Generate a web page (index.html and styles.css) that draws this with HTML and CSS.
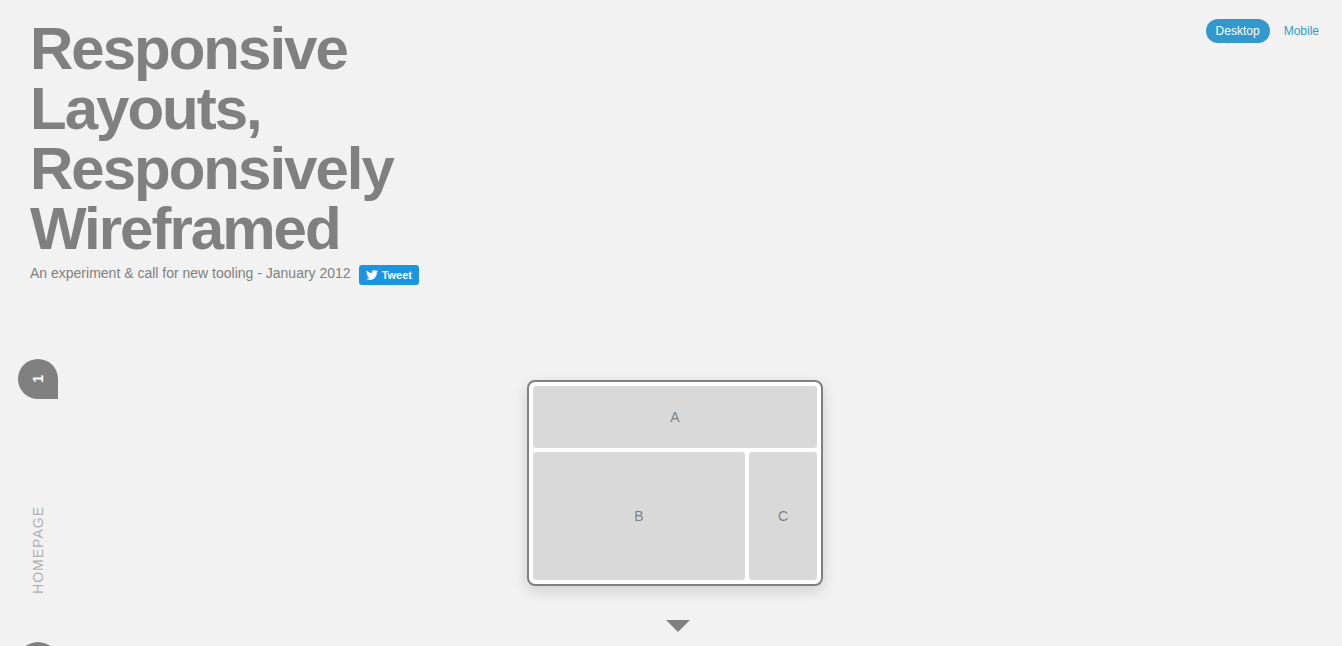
FILE: index.html
```html
<!DOCTYPE html>
<html lang="en">
<head>
<meta charset="utf-8">
<meta name="viewport" content="width=device-width, initial-scale=1">
<title>Responsive Layouts, Responsively Wireframed</title>
<link rel="stylesheet" href="styles.css">
</head>
<body>
<header class="masthead">
  <div class="intro">
    <h1 class="title">Responsive Layouts, Responsively Wireframed</h1>
    <div class="byline">
      <p class="tagline">An experiment &amp; call for new tooling - January 2012</p>
      <a class="tweet" href="#tweet">
        <svg class="bird" viewBox="0 2 24 20" aria-hidden="true"><path d="M23.95 4.57a10 10 0 0 1-2.82.77 4.96 4.96 0 0 0 2.16-2.72c-.95.55-2 .96-3.13 1.18a4.92 4.92 0 0 0-8.38 4.49C7.69 8.1 4.07 6.13 1.64 3.16a4.82 4.82 0 0 0-.67 2.48c0 1.71.87 3.21 2.19 4.1a4.9 4.9 0 0 1-2.23-.62v.06a4.92 4.92 0 0 0 3.95 4.83 5 5 0 0 1-2.21.08 4.94 4.94 0 0 0 4.6 3.42A9.87 9.87 0 0 1 0 19.54a13.99 13.99 0 0 0 7.55 2.21c9.05 0 14-7.5 14-13.99 0-.21 0-.42-.02-.63a9.94 9.94 0 0 0 2.46-2.55z"/></svg>
        <span>Tweet</span>
      </a>
    </div>
  </div>
  <nav class="modes" aria-label="Layout mode">
    <a class="mode mode-active" href="#desktop" aria-current="true">Desktop</a>
    <a class="mode" href="#mobile">Mobile</a>
  </nav>
</header>
<main>
  <section class="step" id="homepage">
    <div class="rail">
      <span class="marker"><span class="vertical">1</span></span>
      <h2 class="label vertical">HOMEPAGE</h2>
    </div>
    <div class="stage">
      <div class="wireframe">
        <div class="block block-wide">A</div>
        <div class="block">B</div>
        <div class="block">C</div>
      </div>
      <svg class="arrow" viewBox="0 0 24 12" aria-hidden="true"><path d="M0 0h24L12 12z"/></svg>
    </div>
  </section>
  <section class="step">
    <div class="rail">
      <span class="marker"></span>
    </div>
  </section>
</main>
</body>
</html>
```
FILE: styles.css
```css
* {
  box-sizing: border-box;
}

body {
  margin: 0;
  background: #f2f2f2;
  color: #808080;
  font: 14px/20px "Liberation Sans", Arial, sans-serif;
}

h1, h2, p {
  margin: 0;
}

a {
  color: #3399cc;
  text-decoration: none;
}

.masthead {
  display: flex;
  justify-content: space-between;
  align-items: flex-start;
  padding: 19px 13px 0 30px;
}

.title {
  max-width: 400px;
  font-size: 60px;
  line-height: 60px;
  letter-spacing: -2px;
}

.byline {
  display: flex;
  align-items: flex-start;
  gap: 8px;
  padding-top: 6px;
}

.tagline {
  line-height: 16px;
}

.tweet {
  display: flex;
  align-items: center;
  gap: 4px;
  height: 20px;
  padding: 0 7px;
  border-radius: 3px;
  background: #1b95e0;
  color: #fff;
  font-size: 11px;
  font-weight: bold;
}

.bird {
  width: 12px;
  height: 10px;
  fill: #fff;
}

.modes {
  display: flex;
  gap: 4px;
}

.mode {
  padding: 0 10px;
  border-radius: 12px;
  font-size: 12px;
  line-height: 24px;
}

.mode-active {
  background: #3399cc;
  color: #fff;
}

main {
  padding-top: 74px;
}

.step {
  display: flex;
  min-height: 283px;
  padding: 0 50px 0 18px;
}

.rail {
  display: flex;
  flex-direction: column;
  align-items: center;
  justify-content: space-between;
  width: 40px;
  padding-bottom: 48px;
}

.marker {
  display: flex;
  align-items: center;
  justify-content: center;
  width: 40px;
  height: 40px;
  border-radius: 20px 20px 0 20px;
  background: #808080;
  color: #fff;
  font-weight: bold;
}

.vertical {
  writing-mode: vertical-rl;
  transform: rotate(180deg);
}

.label {
  color: #b0b0b0;
  font-size: 14px;
  font-weight: normal;
  letter-spacing: 1px;
}

.stage {
  flex: 1;
  display: flex;
  flex-direction: column;
  align-items: center;
  padding-top: 21px;
}

.wireframe {
  display: grid;
  grid-template-columns: 212px 68px;
  grid-template-rows: 62px 128px;
  gap: 4px;
  padding: 4px;
  border: 2px solid #808080;
  border-radius: 8px;
  background: #fff;
  box-shadow: 0 5px 15px rgba(0, 0, 0, 0.15);
}

.block {
  display: flex;
  align-items: center;
  justify-content: center;
  border-radius: 3px;
  background: #d9d9d9;
}

.block-wide {
  grid-column: 1 / -1;
}

.arrow {
  width: 24px;
  height: 12px;
  margin: 34px 0 0 6px;
  fill: #808080;
}
```
